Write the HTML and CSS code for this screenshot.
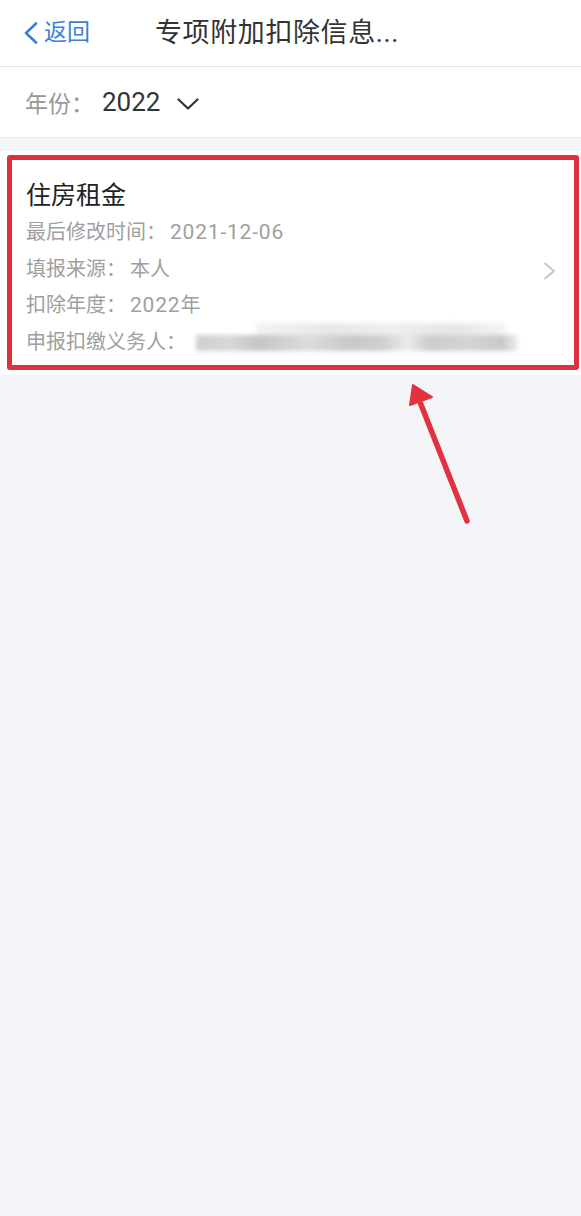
FILE: index.html
```html
<!DOCTYPE html>
<html lang="zh-CN">
<head>
<meta charset="utf-8">
<title>专项附加扣除信息</title>
<link rel="stylesheet" href="styles.css">
</head>
<body>
<div class="page">
  <header class="nav">
    <a class="back">
      <svg class="back-icon" viewBox="0 0 15 22" width="15" height="22"><path d="M13 1.5 L3 11 L13 20.5" fill="none" stroke="#3b7fd9" stroke-width="2.6" stroke-linecap="round" stroke-linejoin="round"/></svg>
      <span>返回</span>
    </a>
    <h1 class="title">专项附加扣除信息...</h1>
  </header>

  <div class="year-row">
    <span class="year-label">年份：</span>
    <span class="year-value">2022</span>
    <svg class="year-caret" viewBox="0 0 22 12" width="22" height="12"><path d="M1.5 1.5 L11 10.5 L20.5 1.5" fill="none" stroke="#333" stroke-width="2.2" stroke-linecap="round" stroke-linejoin="round"/></svg>
  </div>

  <section class="card">
    <div class="card-body">
      <div class="card-title">住房租金</div>
      <div class="card-line">最后修改时间：<span class="num">2021-12-06</span></div>
      <div class="card-line">填报来源：<span class="val">本人</span></div>
      <div class="card-line">扣除年度：<span class="val"><span class="num">2022</span>年</span></div>
      <div class="card-line">申报扣缴义务人：<span class="blur-box"><span class="blur-top"></span><span class="blur-bottom"></span></span></div>
    </div>
    <svg class="card-arrow" viewBox="0 0 13 18" width="13" height="18"><path d="M2 1.5 L11 9 L2 16.5" fill="none" stroke="#c4c4c4" stroke-width="1.8" stroke-linecap="round" stroke-linejoin="round"/></svg>
  </section>

  <div class="highlight"></div>
  <svg class="pointer" viewBox="0 0 581 1216" width="581" height="1216">
    <line x1="467" y1="521" x2="420" y2="402" stroke="#e3323f" stroke-width="5.5" stroke-linecap="round"/>
    <polygon points="413,385 432,397 410,405" fill="#e3323f" stroke="#e3323f" stroke-width="2" stroke-linejoin="round"/>
  </svg>
</div>
</body>
</html>
```

FILE: styles.css
```css
html, body {
  margin: 0;
  padding: 0;
}
body {
  background: #f4f5f9;
  font-family: "Roboto", "Noto Sans CJK SC", sans-serif;
  color: #333;
}
.page {
  position: relative;
  width: 581px;
  min-height: 1216px;
}
.nav {
  height: 67px;
  background: #fff;
  border-bottom: 1px solid #e3e3e6;
  display: flex;
  align-items: center;
  box-sizing: border-box;
  padding-left: 23px;
}
.back {
  display: flex;
  align-items: center;
  color: #3b7fd9;
  font-size: 23px;
  line-height: 30px;
  width: 132px;
}
.back-icon {
  margin-right: 6px;
}
.title {
  margin: 0;
  font-size: 27px;
  font-weight: 400;
  color: #333;
  line-height: 34px;
  letter-spacing: 0.6px;
}
.year-row {
  height: 71px;
  background: #fff;
  border-bottom: 1px solid #e6e6e9;
  display: flex;
  align-items: center;
  padding-left: 25px;
  box-sizing: border-box;
}
.year-label {
  font-size: 23px;
  color: #999;
}
.year-value {
  font-size: 26px;
  color: #333;
  margin-left: 8px;
}
.year-caret {
  margin-left: 17px;
  margin-top: 4px;
}
.card {
  margin-top: 13px;
  background: #fff;
  height: 224px;
  box-sizing: border-box;
  padding: 26px 26px 15px 26px;
  display: flex;
  align-items: center;
  justify-content: space-between;
}
.card-body {
  display: flex;
  flex-direction: column;
  align-self: flex-start;
}
.card-title {
  font-size: 25px;
  line-height: 37px;
  color: #222;
}
.card-line {
  font-size: 20px;
  line-height: 36.7px;
  color: #a0a0a0;
  display: flex;
  align-items: center;
  white-space: nowrap;
}
.val {
  margin-left: 4px;
}
.num {
  font-size: 21px;
  letter-spacing: 0.8px;
  margin-left: 4px;
}
.val .num {
  margin-left: 0;
}
.blur-box {
  display: inline-flex;
  flex-direction: column;
  margin-left: 10px;
  width: 322px;
  height: 30px;
  filter: blur(2px);
  margin-top: -8px;
}
.blur-top {
  height: 12px;
  margin-left: 60px;
  width: 250px;
  background: linear-gradient(90deg, #f2f2f2 0%, #e8e8e8 30%, #eeeeee 55%, #e6e6e6 80%, #f5f5f5 100%);
}
.blur-bottom {
  height: 16px;
  background: linear-gradient(90deg, #cfcfcf 0%, #d8d8d8 10%, #c6c6c6 20%, #dcdcdc 35%, #c8c8c8 48%, #d0d0d0 58%, #ececec 66%, #cccccc 72%, #d4d4d4 85%, #c9c9c9 95%, #eeeeee 100%);
}
.card-arrow {
  margin-right: -1px;
  margin-top: 4px;
}
.highlight {
  position: absolute;
  left: 7px;
  top: 155px;
  width: 572px;
  height: 215px;
  box-sizing: border-box;
  border: 5px solid #e0303f;
  border-radius: 3px;
}
.pointer {
  position: absolute;
  left: 0;
  top: 0;
  pointer-events: none;
}
```
